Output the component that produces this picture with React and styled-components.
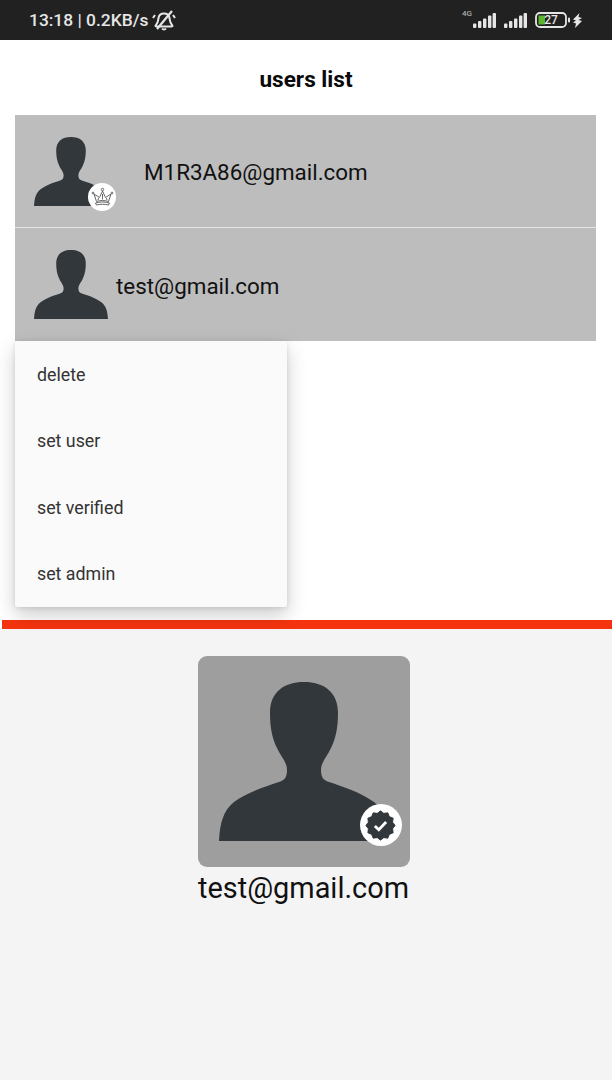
import React from "react";
import styled, { createGlobalStyle } from "styled-components";

const GlobalStyle = createGlobalStyle`
  html, body { margin: 0; padding: 0; background: #fff; }
  body { font-family: Roboto, "Liberation Sans", sans-serif; }
`;

const Page = styled.div`
  width: 612px;
  height: 1080px;
  display: flex;
  flex-direction: column;
  overflow: hidden;
`;

const StatusBar = styled.div`
  height: 40px;
  flex: none;
  background: #212121;
  color: #e6e6e6;
  display: flex;
  align-items: center;
  justify-content: space-between;
  padding: 0 30px 0 29px;
  font-size: 17.4px;
  font-weight: 500;
`;

const StatusGroup = styled.div`
  display: flex;
  align-items: center;
  gap: ${(p) => p.$gap || 0}px;
`;

const TopSection = styled.div`
  height: 579px;
  flex: none;
  background: #fff;
  position: relative;
`;

const Title = styled.h1`
  margin: 0;
  height: 75px;
  line-height: 79px;
  text-align: center;
  font-size: 22.6px;
  font-weight: 700;
  color: #0a0a0a;
`;

const List = styled.div`
  margin: 0 16px 0 15px;
  display: flex;
  flex-direction: column;
  gap: 1px;
  background: #e4e4e4;
`;

const Row = styled.div`
  height: ${(p) => p.$height}px;
  background: #bdbdbd;
  display: flex;
  align-items: center;
  padding-left: 19px;
`;

const Email = styled.span`
  margin-top: 2px;
  font-size: 22.4px;
  color: #111;
`;

const Avatar = styled.div`
  position: relative;
  width: 74px;
  height: 69px;
  margin-right: ${(p) => (p.$badged ? 36 : 8)}px;
  display: flex;
`;

const Badge = styled.div`
  position: absolute;
  width: ${(p) => p.$size}px;
  height: ${(p) => p.$size}px;
  right: ${(p) => p.$right}px;
  bottom: ${(p) => p.$bottom}px;
  border-radius: 50%;
  background: #fff;
  display: flex;
  align-items: center;
  justify-content: center;
`;

const Menu = styled.div`
  position: absolute;
  left: 15px;
  top: 301px;
  width: 272px;
  height: 266px;
  background: #fafafa;
  border-radius: 2px;
  box-shadow: 0 8px 20px rgba(0, 0, 0, 0.2), 0 1px 5px rgba(0, 0, 0, 0.1);
  display: flex;
  flex-direction: column;
`;

const MenuItem = styled.div`
  flex: 1;
  display: flex;
  align-items: center;
  padding-left: 22px;
  font-size: 17.8px;
  color: #333;
`;

const RedBar = styled.div`
  height: 9px;
  flex: none;
  margin: 1px 0 0 2px;
  background: #f5340f;
`;

const Profile = styled.div`
  flex: 1;
  background: #f4f4f4;
  display: flex;
  flex-direction: column;
  align-items: center;
  padding: 27px 5px 0 0;
`;

const ProfilePicture = styled.div`
  position: relative;
  width: 212px;
  height: 211px;
  border-radius: 9px;
  background: #9e9e9e;
  display: flex;
  align-items: center;
  justify-content: center;
`;

const ProfileName = styled.div`
  font-size: 28.9px;
  line-height: 42px;
  color: #111;
`;

const Silhouette = ({ width }) => (
  <svg width={width} height={(width * 159) / 170} viewBox="0 0 170 159">
    <path
      fill="#32373b"
      d="M0 159C1 141 4 129 15 120C29 110 48 104 60 100C66 98 68 95 68 88C68 80 62 75 58 66C53 56 51 45 51 31C51 10 65 0 85 0C105 0 119 10 119 31C119 45 117 56 112 66C108 75 102 80 102 88C102 95 104 98 110 100C122 104 141 110 155 120C166 129 169 141 170 159Z"
    />
  </svg>
);

const Crown = () => (
  <svg width="23" height="22" viewBox="0 0 23 22" fill="none" stroke="#555" strokeWidth="0.9" strokeLinejoin="round">
    <circle cx="11.5" cy="3.5" r="1.2" />
    <path d="M11.5 5L8.5 11.5L3 8L5.5 15.5C9 14.2 14 14.2 17.5 15.5L20 8L14.5 11.5Z" />
    <path d="M4.5 17C8.5 15.6 14.5 15.6 18.5 17L17.5 19C14 18 9 18 5.5 19Z" />
    <path d="M7 14L7.5 12M16 14L15.5 12M11.5 8V13.5" />
    <circle cx="2" cy="7" r="0.9" />
    <circle cx="21" cy="7" r="0.9" />
  </svg>
);

// scalloped seal, points computed around the circle
const sealPoints = Array.from({ length: 24 }, (_, i) => {
  const a = (i * Math.PI) / 12;
  const r = i % 2 ? 14.6 : 17;
  return `${(18 + r * Math.sin(a)).toFixed(2)},${(18 - r * Math.cos(a)).toFixed(2)}`;
}).join(" ");

const Seal = () => (
  <svg width="31" height="31" viewBox="0 0 36 36">
    <polygon points={sealPoints} fill="#32373b" stroke="#32373b" strokeWidth="1" strokeLinejoin="round" />
    <path d="M11.5 18.5L16 23L24.5 14" fill="none" stroke="#fff" strokeWidth="3.2" />
  </svg>
);

const MutedBell = () => (
  <svg width="24" height="22" viewBox="0 0 24 22" fill="none" stroke="#e6e6e6" strokeWidth="2" style={{ marginLeft: 4 }}>
    <path d="M4 16C6 14 6 12 6.5 9C7 6 9 4.5 12 4.5C15 4.5 17 6 17.5 9C18 12 18 14 20 16C21 17 20.5 17.5 19 17.5H5C3.5 17.5 3 17 4 16Z" />
    <path d="M1 9L3 6M23 9L21 6M10 19.5C11 20.8 13 20.8 14 19.5" />
    <path d="M5 20L20 2" strokeWidth="2.2" />
  </svg>
);

const Signal = () => (
  <svg width="23" height="15" viewBox="0 0 23 15" fill="#e6e6e6">
    <rect x="0" y="10.5" width="3.4" height="4.5" rx="1" />
    <rect x="5" y="8" width="3.4" height="7" rx="1" />
    <rect x="10" y="5.5" width="3.4" height="9.5" rx="1" />
    <rect x="15" y="2.5" width="3.4" height="12.5" rx="1" />
    <rect x="19.6" y="0" width="3.4" height="15" rx="1" />
  </svg>
);

const NetworkLabel = styled.div`
  width: 12px;
  height: 24px;
  font-size: 8px;
  line-height: 11px;
  color: #aaa;
  text-align: center;
`;

const Battery = () => (
  <svg width="36" height="16" viewBox="0 0 36 16">
    <rect x="1" y="1" width="30" height="14" rx="4" fill="none" stroke="#e6e6e6" strokeWidth="1.8" />
    <path d="M3.5 3.5H10V12.5H3.5Z" fill="#5fb52c" />
    <rect x="33" y="5.5" width="2" height="5" rx="1" fill="#e6e6e6" />
    <text x="16" y="12.3" textAnchor="middle" fontFamily="Roboto, sans-serif" fontSize="12" fontWeight="500" fill="#e6e6e6">27</text>
  </svg>
);

const BoltIcon = styled.svg`
  margin-left: -6px;
`;

const Bolt = () => (
  <BoltIcon width="9" height="15" viewBox="0 0 9 15" fill="#e6e6e6">
    <path d="M6.5 0L0 6.5L3 7.5L0 9.5L3 10.5L2 15L9 8L5.5 7L9 5L5.5 4Z" />
  </BoltIcon>
);

const menuItems = ["delete", "set user", "set verified", "set admin"];

export default function App() {
  return (
    <Page>
      <GlobalStyle />
      <StatusBar>
        <StatusGroup>
          13:18 | 0.2KB/s
          <MutedBell />
        </StatusGroup>
        <StatusGroup $gap={8}>
          <StatusGroup>
            <NetworkLabel>4G</NetworkLabel>
            <Signal />
          </StatusGroup>
          <Signal />
          <Battery />
          <Bolt />
        </StatusGroup>
      </StatusBar>

      <TopSection>
        <Title>users list</Title>
        <List>
          <Row $height={112}>
            <Avatar $badged>
              <Silhouette width={74} />
              <Badge $size={28} $right={-8} $bottom={-5}>
                <Crown />
              </Badge>
            </Avatar>
            <Email>M1R3A86@gmail.com</Email>
          </Row>
          <Row $height={113}>
            <Avatar>
              <Silhouette width={74} />
            </Avatar>
            <Email>test@gmail.com</Email>
          </Row>
        </List>
        <Menu>
          {menuItems.map((item) => (
            <MenuItem key={item}>{item}</MenuItem>
          ))}
        </Menu>
      </TopSection>

      <RedBar />

      <Profile>
        <ProfilePicture>
          <Silhouette width={170} />
          <Badge $size={42} $right={8} $bottom={21}>
            <Seal />
          </Badge>
        </ProfilePicture>
        <ProfileName>test@gmail.com</ProfileName>
      </Profile>
    </Page>
  );
}
